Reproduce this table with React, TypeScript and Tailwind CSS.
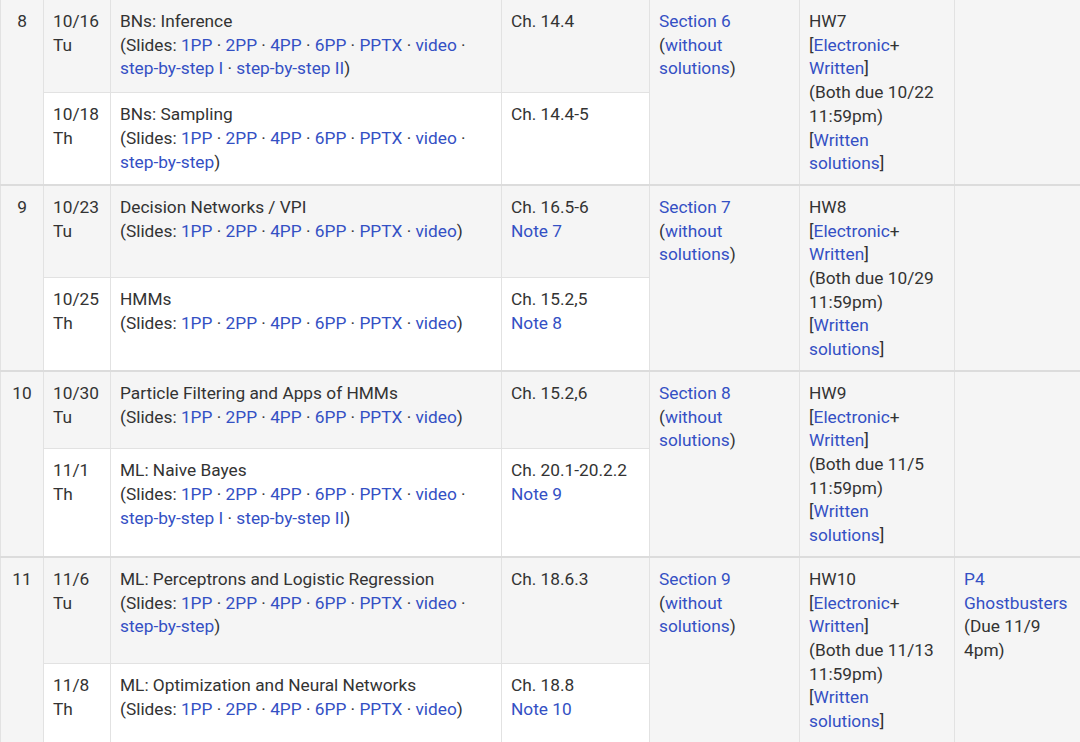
import React from 'react';

const A = ({ children }: { children: React.ReactNode }) => (
  <a className="text-[#3450c4]">{children}</a>
);

const Slides = ({ extra }: { extra?: React.ReactNode }) => (
  <>
    (Slides: <A>1PP</A> · <A>2PP</A> · <A>4PP</A> · <A>6PP</A> · <A>PPTX</A> · <A>video</A>
    {extra ? <> · {extra}</> : null})
  </>
);

const Hw = ({ name, due }: { name: string; due: string }) => (
  <>
    {name}
    <br />[<A>Electronic</A>+
    <br />
    <A>Written</A>]
    <br />
    (Both due {due}
    <br />
    11:59pm)
    <br />[<A>Written</A>
    <br />
    <A>solutions</A>]
  </>
);

const Sec = ({ n }: { n: number }) => (
  <>
    <A>Section {n}</A>
    <br />(<A>without</A>
    <br />
    <A>solutions</A>)
  </>
);

type Lecture = { date: string; day: string; title: string; slides: React.ReactNode; reading: React.ReactNode; h: string };
type Week = { n: number; lectures: [Lecture, Lecture]; section: number; hw: string; due: string; project?: React.ReactNode; sep: boolean };

const weeks: Week[] = [
  {
    n: 8,
    section: 6,
    hw: 'HW7',
    due: '10/22',
    sep: true,
    lectures: [
      { date: '10/16', day: 'Tu', title: 'BNs: Inference', h: 'h-[93px]', slides: <Slides extra={<><A>step-by-step I</A> · <A>step-by-step II</A></>} />, reading: 'Ch. 14.4' },
      { date: '10/18', day: 'Th', title: 'BNs: Sampling', h: 'h-[92px]', slides: <Slides extra={<A>step-by-step</A>} />, reading: 'Ch. 14.4-5' },
    ],
  },
  {
    n: 9,
    section: 7,
    hw: 'HW8',
    due: '10/29',
    sep: true,
    lectures: [
      { date: '10/23', day: 'Tu', title: 'Decision Networks / VPI', h: 'h-[93px]', slides: <Slides />, reading: <>Ch. 16.5-6<br /><A>Note 7</A></> },
      { date: '10/25', day: 'Th', title: 'HMMs', h: 'h-[93px]', slides: <Slides />, reading: <>Ch. 15.2,5<br /><A>Note 8</A></> },
    ],
  },
  {
    n: 10,
    section: 8,
    hw: 'HW9',
    due: '11/5',
    sep: true,
    lectures: [
      { date: '10/30', day: 'Tu', title: 'Particle Filtering and Apps of HMMs', h: 'h-[78px]', slides: <Slides />, reading: 'Ch. 15.2,6' },
      { date: '11/1', day: 'Th', title: 'ML: Naive Bayes', h: 'h-[108px]', slides: <Slides extra={<><A>step-by-step I</A> · <A>step-by-step II</A></>} />, reading: <>Ch. 20.1-20.2.2<br /><A>Note 9</A></> },
    ],
  },
  {
    n: 11,
    section: 9,
    hw: 'HW10',
    due: '11/13',
    sep: false,
    project: (
      <>
        <A>P4</A>
        <br />
        <A>Ghostbusters</A>
        <br />
        (Due 11/9
        <br />
        4pm)
      </>
    ),
    lectures: [
      { date: '11/6', day: 'Tu', title: 'ML: Perceptrons and Logistic Regression', h: 'h-[107px]', slides: <Slides extra={<A>step-by-step</A>} />, reading: 'Ch. 18.6.3' },
      { date: '11/8', day: 'Th', title: 'ML: Optimization and Neural Networks', h: 'h-[79px]', slides: <Slides />, reading: <>Ch. 18.8<br /><A>Note 10</A></> },
    ],
  },
];

const td = 'align-top border border-[#e2e2e2] pl-[9px] pr-2 pt-[10px] pb-2';

export default function App() {
  return (
    <div className="w-[1080px] h-[742px] overflow-hidden bg-white text-[#333] text-[17.3px] leading-[23.7px] font-['Roboto',sans-serif]">
      <table className="w-[1080px] table-fixed border-collapse -mt-px">
        <colgroup>
          <col className="w-[43px]" />
          <col className="w-[67px]" />
          <col className="w-[391px]" />
          <col className="w-[148px]" />
          <col className="w-[150px]" />
          <col className="w-[155px]" />
          <col className="w-[126px]" />
        </colgroup>
        <tbody>
          {weeks.map((w) =>
            w.lectures.map((l, i) => {
              const sep = w.sep && i === 1 ? ' border-b-2 border-b-[#dcdcdc]' : '';
              const bg = i === 0 ? 'bg-[#f5f5f5]' : 'bg-white';
              return (
                <tr key={w.n + l.date} className={l.h}>
                  {i === 0 && (
                    <td rowSpan={2} className={`${td} bg-[#f5f5f5] text-center !pl-0 !pr-0 ${w.sep ? 'border-b-2 border-b-[#dcdcdc]' : ''}`}>
                      {w.n}
                    </td>
                  )}
                  <td className={`${td} ${bg}${sep}`}>
                    {l.date}
                    <br />
                    {l.day}
                  </td>
                  <td className={`${td} ${bg}${sep}`}>
                    {l.title}
                    <br />
                    {l.slides}
                  </td>
                  <td className={`${td} ${bg}${sep}`}>{l.reading}</td>
                  {i === 0 && (
                    <>
                      <td rowSpan={2} className={`${td} bg-[#f5f5f5] ${w.sep ? 'border-b-2 border-b-[#dcdcdc]' : ''}`}>
                        <Sec n={w.section} />
                      </td>
                      <td rowSpan={2} className={`${td} bg-[#f5f5f5] ${w.sep ? 'border-b-2 border-b-[#dcdcdc]' : ''}`}>
                        <Hw name={w.hw} due={w.due} />
                      </td>
                      <td rowSpan={2} className={`${td} bg-[#f5f5f5] ${w.sep ? 'border-b-2 border-b-[#dcdcdc]' : ''}`}>
                        {w.project}
                      </td>
                    </>
                  )}
                </tr>
              );
            })
          )}
        </tbody>
      </table>
    </div>
  );
}
